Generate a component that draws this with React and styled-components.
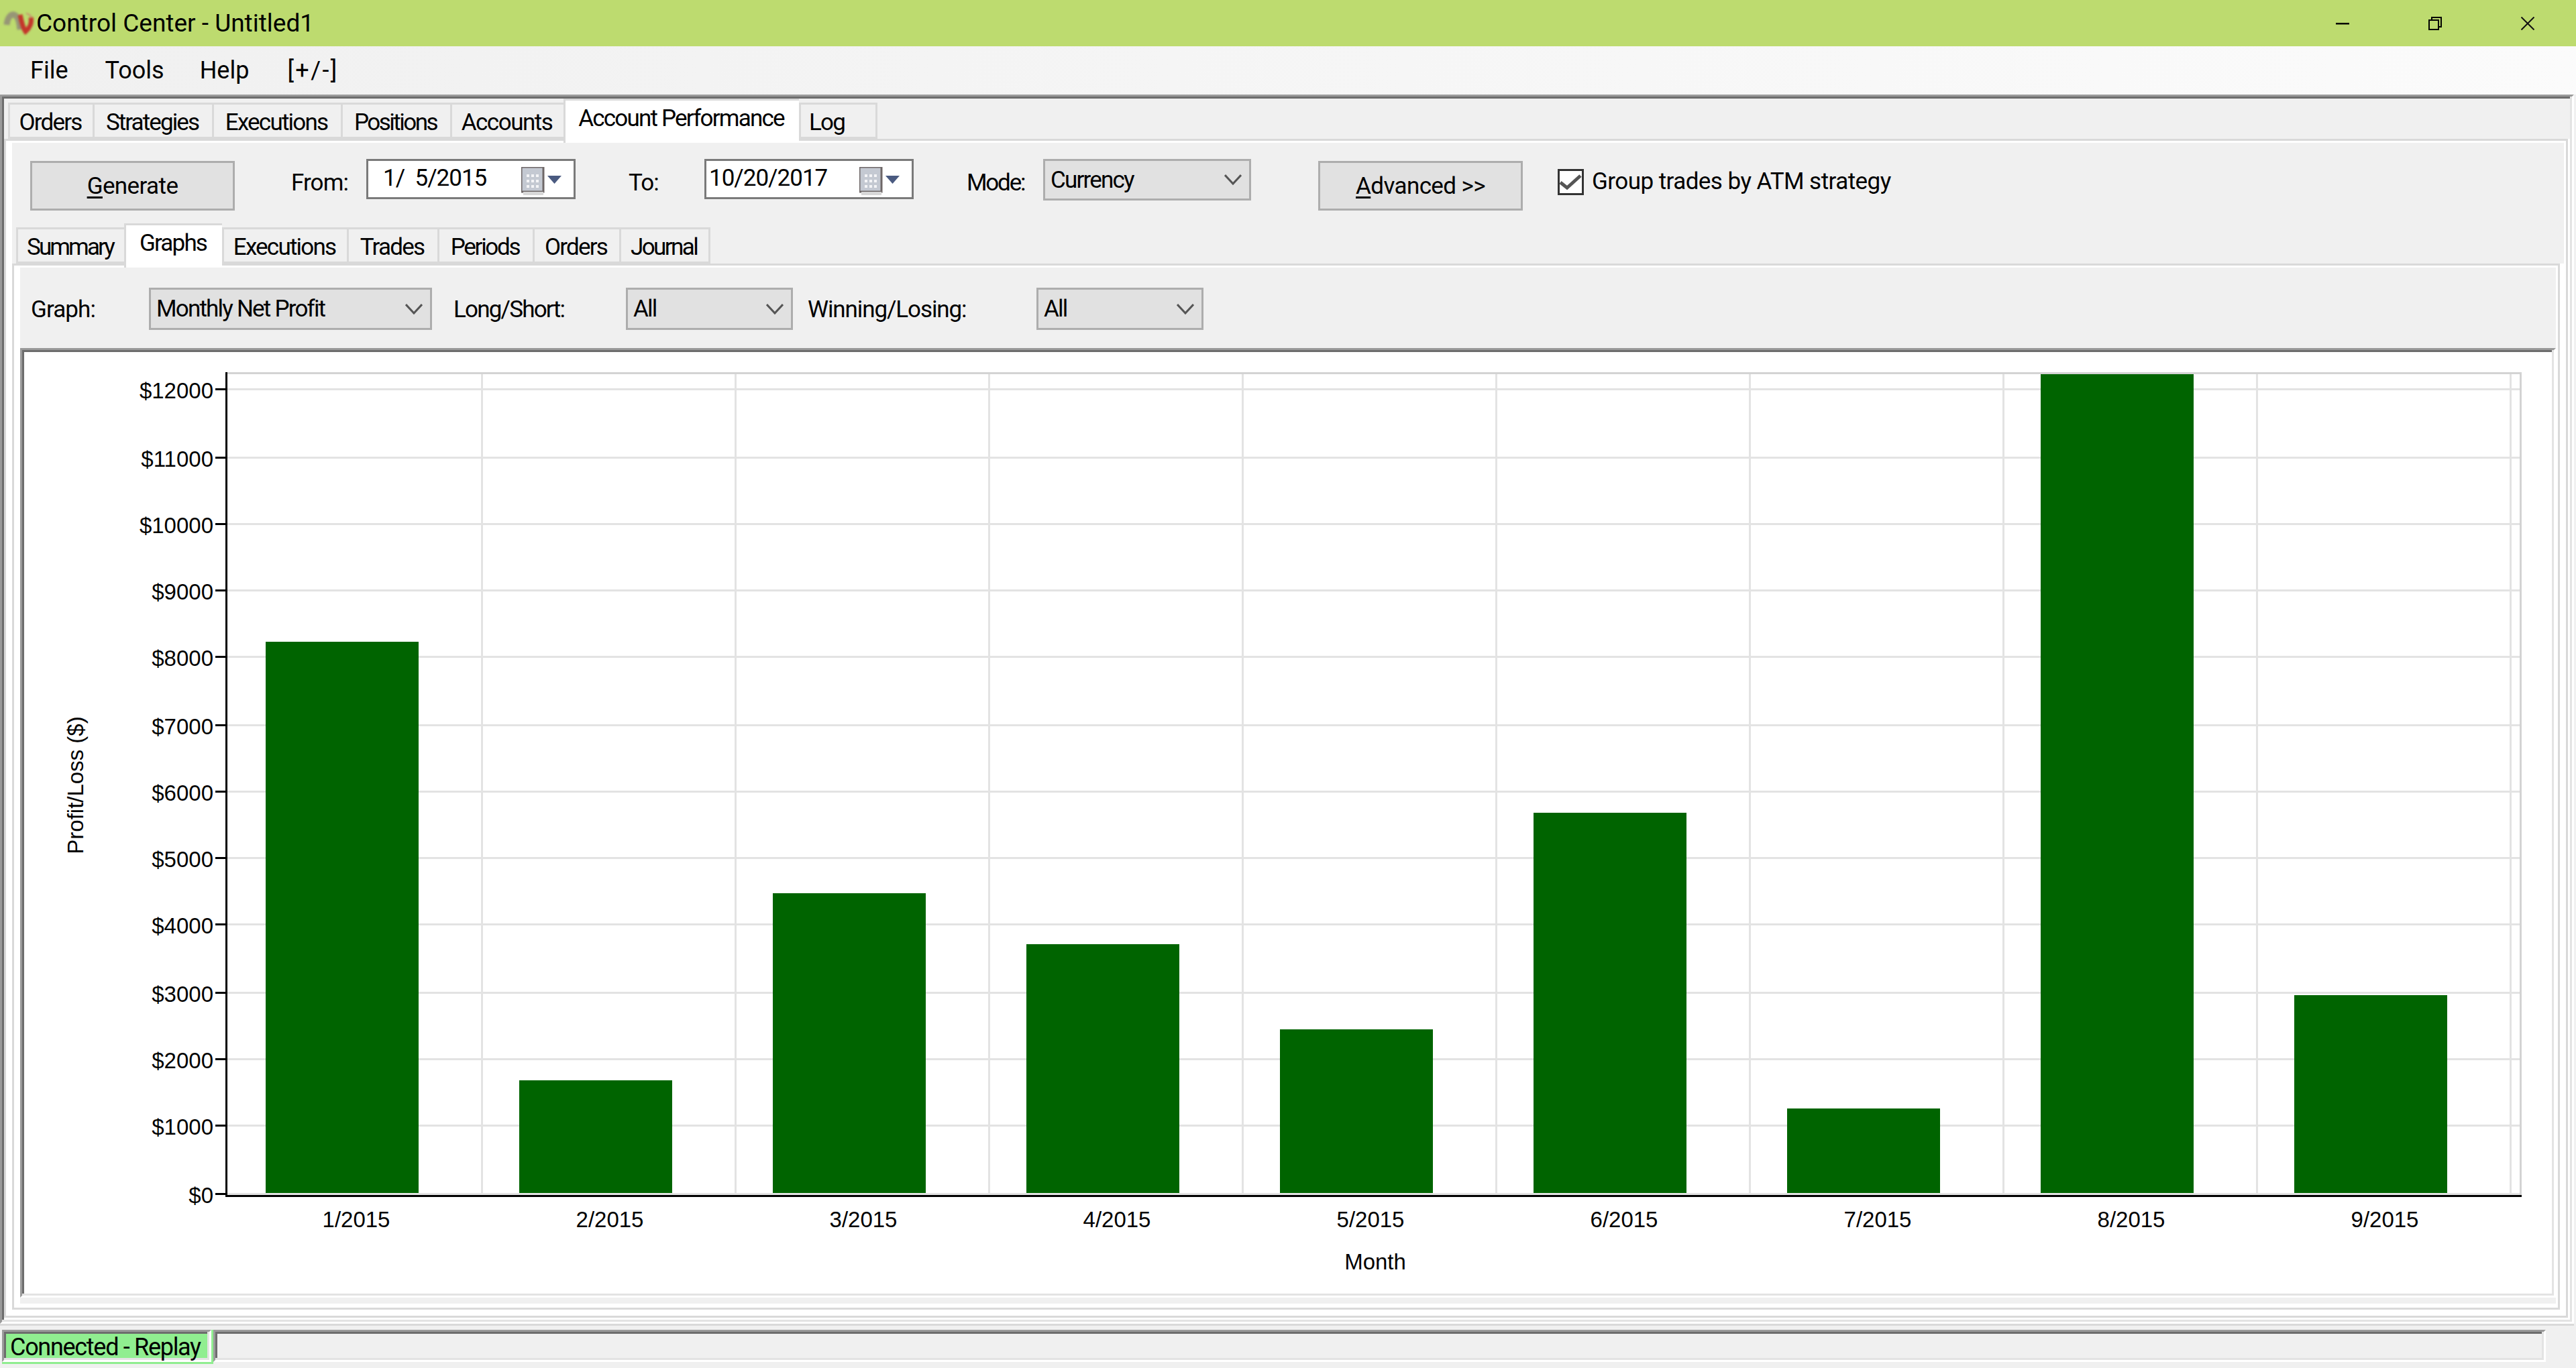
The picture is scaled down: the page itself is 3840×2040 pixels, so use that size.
import React from 'react';
import styled, { createGlobalStyle } from 'styled-components';

const UI_FONT = '"Roboto", "Liberation Sans", sans-serif';
const CHART_FONT = '"Liberation Sans", Arial, sans-serif';

const GlobalStyle = createGlobalStyle`
  html, body {
    margin: 0;
    padding: 0;
    background: #f0f0f0;
  }
`;

const Window = styled.div`
  width: 3840px;
  height: 2040px;
  display: flex;
  flex-direction: column;
  overflow: hidden;
  background: #f0f0f0;
  color: #000;
  font-family: ${UI_FONT};
  font-size: 35px;
  letter-spacing: -0.9px;
`;

const TitleBar = styled.div`
  height: 69px;
  flex: none;
  display: flex;
  align-items: center;
  background: #bddb6f;
`;

const TitleText = styled.div`
  margin-left: 1px;
  flex: 1;
  font-size: 37px;
  letter-spacing: 0;
  line-height: 74px;
`;

const Logo = styled.svg`
  width: 50px;
  height: 69px;
  flex: none;
  margin-left: 3px;
  filter: blur(1.4px);
`;

const WindowButton = styled.div`
  width: 138px;
  height: 69px;
  display: flex;
  align-items: center;
  justify-content: center;
`;

const WindowButtons = styled.div`
  display: flex;
  padding-right: 3px;
`;

const MenuBar = styled.div`
  height: 72px;
  flex: none;
  display: flex;
  align-items: center;
  background: linear-gradient(90deg, #f0f0f0, #fbfbfb);
`;

const MenuItem = styled.div`
  margin-left: ${(p) => p.$left}px;
  font-size: 36px;
  letter-spacing: ${(p) => p.$ls || 0}px;
`;

const SunkenFrame = styled.div`
  box-sizing: border-box;
  border-style: solid;
  border-width: 3px;
  border-color: #9a9a9a #fff #fff #9a9a9a;
  padding: 3px;
  box-shadow: inset -3px -3px 0 #e3e3e3, inset 3px 3px 0 #6d6d6d;
`;

const MainFrame = styled(SunkenFrame)`
  width: 3837px;
  height: 1833px;
  flex: none;
  display: flex;
  flex-direction: column;
  background: #fff;
  background-clip: padding-box;
`;

const TabStrip = styled.div`
  display: flex;
  align-items: flex-start;
  flex: none;
  height: ${(p) => p.$height}px;
  padding: ${(p) => p.$top}px 0 0 6px;
  box-sizing: border-box;
  background: #f0f0f0;
`;

const Tab = styled.div`
  box-sizing: border-box;
  position: relative;
  width: ${(p) => p.$w}px;
  height: ${(p) => (p.$active ? 66 : 54)}px;
  margin-top: ${(p) => (p.$active ? -6 : 0)}px;
  z-index: ${(p) => (p.$active ? 2 : 1)};
  border: 3px solid #d9d9d9;
  border-width: 3px 0 ${(p) => (p.$active ? 0 : 3)}px 3px;
  border-right-width: ${(p) => (p.$last ? 3 : 0)}px;
  background: ${(p) => (p.$active ? '#fff' : '#f0f0f0')};
  line-height: 53px;
  letter-spacing: ${(p) => p.$ls || -1.8}px;
  text-align: ${(p) => (p.$indent ? 'left' : 'center')};
  padding: 0 3px 0 ${(p) => p.$indent || 0}px;
  white-space: nowrap;
`;

const OuterPage = styled.div`
  box-sizing: border-box;
  width: 3822px;
  flex: 1;
  display: flex;
  flex-direction: column;
  border: 3px solid #d9d9d9;
  padding: 3px 0 9px 9px;
  background: #fff;
  margin-bottom: 3px;
`;

const Toolbar = styled.div`
  height: 126px;
  flex: none;
  display: flex;
  align-items: flex-start;
  padding-left: 27px;
  background: #f0f0f0;
  margin-right: 3px;
`;

const SubStrip = styled(TabStrip)`
  margin-right: 3px;
`;

const InnerPage = styled.div`
  box-sizing: border-box;
  width: 3798px;
  flex: 1;
  display: flex;
  flex-direction: column;
  border: 3px solid #d9d9d9;
  padding: 3px 3px 6px 9px;
  background: #fff;
`;

const InnerBody = styled.div`
  flex: 1;
  display: flex;
  flex-direction: column;
  background: #f0f0f0;
`;

const FilterRow = styled.div`
  height: 120px;
  flex: none;
  display: flex;
  align-items: flex-start;
`;

const ChartFrame = styled(SunkenFrame)`
  height: 1416px;
  flex: none;
  background: #fff;
  background-clip: padding-box;
`;

const Label = styled.div`
  box-sizing: border-box;
  flex: none;
  width: ${(p) => p.$w}px;
  margin-left: ${(p) => p.$left}px;
  margin-top: ${(p) => p.$top}px;
  line-height: 44px;
  letter-spacing: ${(p) => p.$ls || -0.9}px;
  white-space: nowrap;
`;

const PushButton = styled.div`
  box-sizing: border-box;
  flex: none;
  width: 305px;
  height: 74px;
  margin-left: ${(p) => p.$left || 0}px;
  margin-top: 27px;
  border: 3px solid #adadad;
  background: #e1e1e1;
  line-height: 69px;
  letter-spacing: -0.6px;
  text-align: center;
  white-space: nowrap;
  u {
    text-underline-offset: 4px;
    text-decoration-thickness: 3px;
  }
`;

const DatePicker = styled.div`
  box-sizing: border-box;
  flex: none;
  position: relative;
  width: 312px;
  height: 60px;
  margin-top: 24px;
  border: 3px solid #7a7a7a;
  background: #fff;
  padding-left: ${(p) => p.$pad}px;
  line-height: 52px;
  white-space: pre;
  letter-spacing: -1px;
`;

const CalendarIcon = styled.svg`
  position: absolute;
  left: 228px;
  top: 9px;
  width: 62px;
  height: 42px;
`;

const Select = styled.div`
  box-sizing: border-box;
  flex: none;
  display: flex;
  align-items: center;
  justify-content: space-between;
  width: ${(p) => p.$w}px;
  height: ${(p) => p.$h}px;
  margin-top: ${(p) => p.$top}px;
  border: 3px solid #adadad;
  background: #e1e1e1;
  padding: 0 11px 0 8px;
  letter-spacing: -1.8px;
  white-space: nowrap;
`;

const Chevron = styled.svg`
  width: 26px;
  height: 16px;
  flex: none;
`;

const CheckBox = styled.svg`
  flex: none;
  width: 39px;
  height: 39px;
  margin-left: 52px;
  margin-top: 39px;
`;

const ChartSvg = styled.svg`
  display: block;
  width: 3768px;
  height: 1404px;
  shape-rendering: crispEdges;
  text {
    font-family: ${CHART_FONT};
    font-size: 33px;
    fill: #000;
    letter-spacing: 0;
    shape-rendering: auto;
  }
`;

const StatusBar = styled.div`
  box-sizing: border-box;
  width: 3837px;
  flex: 1;
  display: flex;
  align-items: flex-start;
  border-top: 3px solid #d9d9d9;
  padding: 6px 0 0 3px;
`;

const ConnectionBox = styled.div`
  width: 315px;
  height: 51px;
  flex: none;
  background: #90ee90;
`;

const ConnectionStatus = styled(SunkenFrame)`
  width: 312px;
  height: 48px;
  background: #90ee90;
  background-clip: padding-box;
  padding-left: 9px;
  line-height: 40px;
  font-size: 36px;
  letter-spacing: -1.3px;
  white-space: nowrap;
`;

const StatusPanel = styled(SunkenFrame)`
  width: 3477px;
  height: 48px;
  background-clip: padding-box;
`;

const TOP_TABS = [
  { name: 'Orders', w: 126 },
  { name: 'Strategies', w: 178, ls: -1.9 },
  { name: 'Executions', w: 192 },
  { name: 'Positions', w: 163, ls: -2.5 },
  { name: 'Accounts', w: 169, ls: -1.5 },
  { name: 'Account Performance', w: 351, active: true },
  { name: 'Log', w: 117, last: true, indent: 12 },
];

const SUB_TABS = [
  { name: 'Summary', w: 161, ls: -2.9 },
  { name: 'Graphs', w: 146, active: true },
  { name: 'Executions', w: 186 },
  { name: 'Trades', w: 135 },
  { name: 'Periods', w: 142, ls: -2.3 },
  { name: 'Orders', w: 129 },
  { name: 'Journal', w: 136, last: true, ls: -2.6 },
];

const TICKS = [1779, 1677, 1578, 1479, 1377, 1278, 1179, 1080, 978, 879, 780, 681, 579];
const BAR_TOPS = [957, 1611, 1332, 1408, 1535, 1212, 1653, 558, 1484];
const GRID_X = [717, 1095, 1473, 1851, 2229, 2607, 2985, 3363, 3741];

function ChevronIcon() {
  return (
    <Chevron viewBox="0 0 26 16">
      <polyline points="1,1 13,14 25,1" fill="none" stroke="#555" strokeWidth="3" />
    </Chevron>
  );
}

function Calendar() {
  return (
    <CalendarIcon viewBox="0 0 62 42">
      <rect x="0" y="0" width="33" height="37" fill="#c4c9d2" stroke="#6e6767" strokeWidth="3" />
      <rect x="3" y="37" width="30" height="5" fill="#d8d8d8" />
      {[0, 1, 2].map((row) =>
        [0, 1, 2].map((col) => (
          <rect key={`${row}-${col}`} x={8 + col * 7} y={11 + row * 8} width="4" height="4" fill="#f4f4f6" />
        ))
      )}
      <polygon points="39,13 60,13 49.5,25" fill="#4a5a80" />
    </CalendarIcon>
  );
}

function Chart() {
  return (
    <ChartSvg viewBox="36 525 3768 1404">
      {TICKS.map((y) => (
        <rect key={y} x="339" y={y} width="3417" height="3" fill="#e3e3e3" />
      ))}
      {GRID_X.map((x) => (
        <rect key={x} x={x} y="558" width="3" height="1224" fill="#e3e3e3" />
      ))}
      <rect x="339" y="555" width="3420" height="3" fill="#d3d3d3" />
      <rect x="3756" y="555" width="3" height="1227" fill="#d3d3d3" />
      {BAR_TOPS.map((top, i) => (
        <rect key={i} x={396 + i * 378} y={top} width="228" height={1779 - top} fill="#006400" />
      ))}
      <rect x="336" y="555" width="3" height="1230" fill="#000" />
      <rect x="336" y="1782" width="3423" height="3" fill="#000" />
      {TICKS.map((y, i) => (
        <g key={y}>
          <rect x="321" y={y} width="15" height="3" fill="#000" />
          <text x="318" y={y + 15} textAnchor="end">{`$${i * 1000}`}</text>
        </g>
      ))}
      {BAR_TOPS.map((top, i) => (
        <text key={i} x={531 + i * 378} y="1830" textAnchor="middle">{`${i + 1}/2015`}</text>
      ))}
      <text x="2050" y="1893" textAnchor="middle">Month</text>
      <text x="124" y="1171" textAnchor="middle" transform="rotate(-90 124 1171)">Profit/Loss ($)</text>
    </ChartSvg>
  );
}

export default function App() {
  return (
    <Window>
      <GlobalStyle />
      <TitleBar>
        <Logo viewBox="0 0 50 69">
          <path d="M7 37 C8 26 13 21 18 22 C24 24 26 34 27 44" fill="none" stroke="#8d8578" strokeWidth="9" opacity="0.8" />
          <path d="M27 22 C29 32 31 42 35 47 C41 42 45 34 43 26" fill="none" stroke="#c4352a" strokeWidth="7" />
          <path d="M44 27 C43 23 40 21 36 20" fill="none" stroke="#c98a70" strokeWidth="2" />
        </Logo>
        <TitleText>Control Center - Untitled1</TitleText>
        <WindowButtons>
          <WindowButton>
            <svg width="20" height="20" viewBox="0 0 20 20">
              <rect y="9" width="20" height="2.5" fill="#000" />
            </svg>
          </WindowButton>
          <WindowButton>
            <svg width="20" height="20" viewBox="0 0 20 20" fill="none" stroke="#000" strokeWidth="2">
              <rect x="1" y="5" width="14" height="14" />
              <path d="M5 5V1H19V15H15" />
            </svg>
          </WindowButton>
          <WindowButton>
            <svg width="20" height="20" viewBox="0 0 20 20" fill="none" stroke="#111" strokeWidth="2">
              <path d="M0.5 0.5L19.5 19.5M19.5 0.5L0.5 19.5" />
            </svg>
          </WindowButton>
        </WindowButtons>
      </TitleBar>

      <MenuBar>
        <MenuItem $left={45}>File</MenuItem>
        <MenuItem $left={55}>Tools</MenuItem>
        <MenuItem $left={53}>Help</MenuItem>
        <MenuItem $left={57} $ls={2.4}>[+/-]</MenuItem>
      </MenuBar>

      <MainFrame>
        <TabStrip $height={60} $top={6}>
          {TOP_TABS.map((tab) => (
            <Tab key={tab.name} $w={tab.w} $active={tab.active} $last={tab.last} $ls={tab.ls} $indent={tab.indent}>
              {tab.name}
            </Tab>
          ))}
        </TabStrip>
        <OuterPage>
          <Toolbar>
            <PushButton><u>G</u>enerate</PushButton>
            <Label $w={112} $left={84} $top={38}>From:</Label>
            <DatePicker $pad={22}>
              {'1/  5/2015'}
              <Calendar />
            </DatePicker>
            <Label $w={113} $left={79} $top={38}>To:</Label>
            <DatePicker $pad={4}>
              10/20/2017
              <Calendar />
            </DatePicker>
            <Label $w={114} $left={79} $top={38} $ls={-2.2}>Mode:</Label>
            <Select $w={310} $h={62} $top={24}>
              Currency
              <ChevronIcon />
            </Select>
            <PushButton $left={100}><u>A</u>dvanced &gt;&gt;</PushButton>
            <CheckBox viewBox="0 0 39 39">
              <rect x="1.5" y="1.5" width="36" height="36" fill="#fff" stroke="#333" strokeWidth="3" />
              <polyline points="4,20 14,28 34,10" fill="none" stroke="#555" strokeWidth="5" />
            </CheckBox>
            <Label $w={460} $left={12} $top={36} $ls={-0.55}>Group trades by ATM strategy</Label>
          </Toolbar>
          <SubStrip $height={54} $top={0}>
            {SUB_TABS.map((tab) => (
              <Tab key={tab.name} $w={tab.w} $active={tab.active} $last={tab.last} $ls={tab.ls}>
                {tab.name}
              </Tab>
            ))}
          </SubStrip>
          <InnerPage>
            <InnerBody>
              <FilterRow>
                <Label $w={176} $left={16} $top={41}>Graph:</Label>
                <Select $w={422} $h={63} $top={30}>
                  Monthly Net Profit
                  <ChevronIcon />
                </Select>
                <Label $w={257} $left={32} $top={41} $ls={-1.8}>Long/Short:</Label>
                <Select $w={249} $h={63} $top={30}>
                  All
                  <ChevronIcon />
                </Select>
                <Label $w={341} $left={22} $top={41} $ls={-1.1}>Winning/Losing:</Label>
                <Select $w={249} $h={63} $top={30}>
                  All
                  <ChevronIcon />
                </Select>
              </FilterRow>
              <ChartFrame>
                <Chart />
              </ChartFrame>
            </InnerBody>
          </InnerPage>
        </OuterPage>
      </MainFrame>

      <StatusBar>
        <ConnectionBox>
          <ConnectionStatus>Connected - Replay</ConnectionStatus>
        </ConnectionBox>
        <StatusPanel />
      </StatusBar>
    </Window>
  );
}
